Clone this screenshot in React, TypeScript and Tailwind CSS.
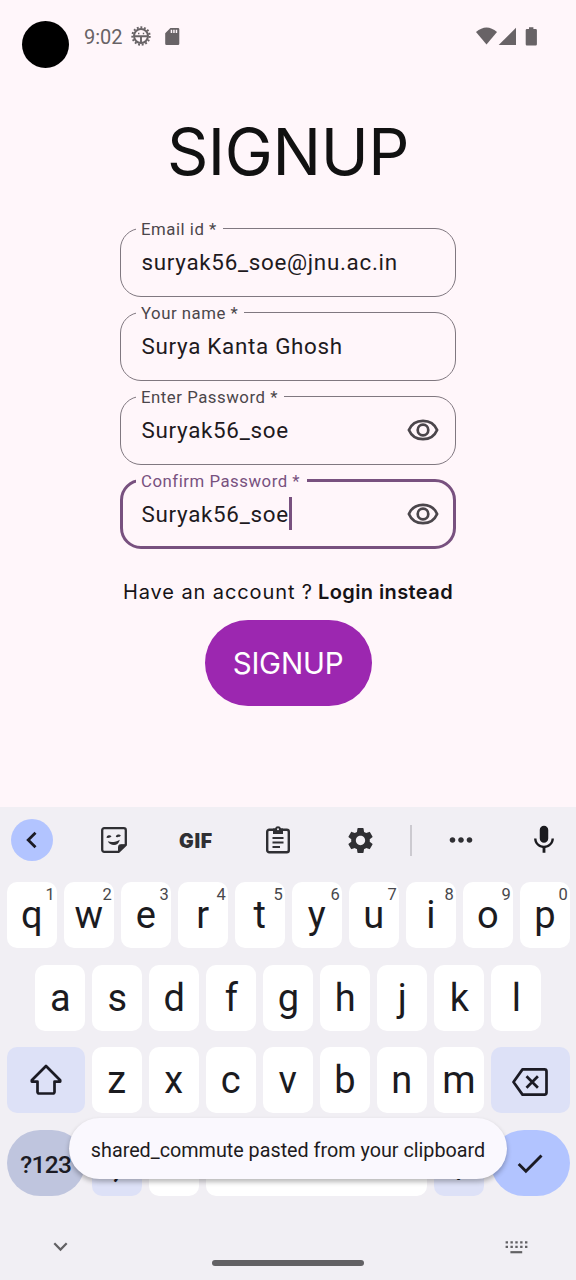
import type { ReactNode } from 'react';
import { MdMic, MdMoreHoriz, MdSettings } from 'react-icons/md';

function StatusBar() {
  return (
    <header className="flex h-[75px] items-start justify-between pl-[21.500px] pr-[38px] text-[#686366]">
      <div className="flex items-start">
        <div className="mt-[21px] h-[47px] w-[47px] rounded-full bg-black" />
        <span className="ml-[15.500px] mt-[25px] text-[20px] leading-6">9:02</span>
        <svg className="ml-[8px] mt-[26px]" width="20" height="20" viewBox="0 0 20 20" fill="none" stroke="currentColor">
          <circle cx="10" cy="10" r="8.7" strokeWidth="2" strokeDasharray="1.9 1.75" />
          <circle cx="10" cy="10" r="7" strokeWidth="2" />
          <path d="M3 10.200h14M10 10v7" strokeWidth="1.900" />
          <path d="M7 7.400h1.400M11.800 7.400h1.400" strokeWidth="1.500" />
        </svg>
        <svg className="ml-[14px] mt-[28px]" width="15" height="17" viewBox="0 0 15 17">
          <path fill="currentColor" fillRule="evenodd" d="M5.400 0H13a1.300 1.300 0 0 1 1.300 1.300v14.400A1.300 1.300 0 0 1 13 17H1.500A1.300 1.300 0 0 1 .2 15.700V5.200zM5.700 1.700v3.300h1.500V1.700zm2.500 0v3.300h1.500V1.700zm2.500 0v3.300h1.500V1.700z" />
        </svg>
      </div>
      <svg className="mt-[27px]" width="62" height="19" viewBox="0 0 62 19" fill="currentColor">
        <path d="M0 5Q10.500-4.200 21 5L10.500 17.600z" />
        <path d="M40 .7V18H22.700z" />
        <path d="M53 .2h4.400v1.800H59.700a1.200 1.200 0 0 1 1.200 1.200v14.100a1.200 1.200 0 0 1-1.200 1.200h-8.800a1.200 1.200 0 0 1-1.200-1.200V3.200A1.200 1.200 0 0 1 50.900 2h2.100z" />
      </svg>
    </header>
  );
}

function EyeIcon() {
  return (
    <svg width="32" height="24" viewBox="0 0 32 24" fill="none" stroke="#4b464b" strokeWidth="2.700">
      <path d="M1.900 12C4.400 6 9.600 2.800 16 2.800S27.600 6 30.100 12C27.600 18 22.400 21.200 16 21.200S4.400 18 1.900 12z" />
      <circle cx="16" cy="12" r="5.300" />
    </svg>
  );
}

function Field({ label, value, eye, focused }: { label: string; value: string; eye?: boolean; focused?: boolean }) {
  return (
    <fieldset
      className={
        focused
          ? 'h-[80px] w-[336px] rounded-[21px] border-[3px] border-[#78517f]'
          : 'h-[80px] w-[336px] rounded-[21px] border-[1.400px] border-[#807880]'
      }
    >
      <legend
        className={
          focused
            ? 'ml-[13px] h-6 pl-[5px] pr-[7px] text-[16.800px] leading-6 tracking-[0.520px] text-[#78517f]'
            : 'ml-[15px] h-6 pl-[5px] pr-[6px] text-[16.800px] leading-6 tracking-[0.520px] text-[#4b464b]'
        }
      >
        {label}
      </legend>
      <div className={focused ? 'flex h-[42px] items-center pl-[18.500px] pr-[14.500px]' : 'flex h-[42px] items-center pl-[20.500px] pr-[16.500px]'}>
        <span className="text-[22.400px] leading-[34px] tracking-[0.700px] text-[#1e1a1e]">{value}</span>
        {focused && <span className="h-[33px] w-[3px] bg-[#78517f]" />}
        {eye && (
          <span className="ml-auto">
            <EyeIcon />
          </span>
        )}
      </div>
    </fieldset>
  );
}

function Key({ children, hint }: { children?: ReactNode; hint?: string }) {
  return (
    <div className="relative flex h-[66px] w-[50px] items-center justify-center rounded-[10px] bg-white text-[38px] text-[#1b1b1f]">
      <span className="leading-none">{children}</span>
      {hint && <span className="absolute right-[2px] top-[3px] text-[16.500px] leading-5 text-[#48484c]">{hint}</span>}
    </div>
  );
}

function Toolbar() {
  return (
    <div className="flex h-[66px] items-center text-[#2f2f33]">
      <div className="ml-[11px] flex h-[42px] w-[42px] items-center justify-center rounded-full bg-[#b2c4ff]">
        <svg width="14" height="18" viewBox="0 0 14 18" fill="none" stroke="#1b1b24" strokeWidth="2.800">
          <path d="M10.500 1.700 3.200 9l7.300 7.300" />
        </svg>
      </div>
      <svg className="ml-[48px]" width="26" height="26" viewBox="0 0 26 26" fill="none" stroke="currentColor" strokeWidth="2.300" strokeLinejoin="round">
        <path d="M3.200 1.200h19.600a2 2 0 0 1 2 2V18l-7 6.800H3.200a2 2 0 0 1-2-2V3.200a2 2 0 0 1 2-2z" />
        <path d="M17.500 24.500v-4.800a2 2 0 0 1 2-2h5z" fill="currentColor" strokeWidth="1" />
        <path d="M6.500 10.800a1.700 1.700 0 0 1 3.100-.7M15.900 10.100a1.700 1.700 0 0 1 3.100-.8" strokeWidth="2.200" />
        <path d="M6.800 14.300c3.500 1.300 8.300.8 12-1.600-.7 3.300-3 5.300-5.800 5.300-2.700 0-4.900-1.200-6.200-3.700z" fill="currentColor" stroke="none" />
      </svg>
      <span className="ml-[51px] flex w-[36px] justify-center pt-px font-['Inter'] text-[19.500px] font-black leading-6 tracking-[0.700px]">GIF</span>
      <svg className="ml-[51px]" width="26" height="30" viewBox="0 0 26 30" fill="none" stroke="currentColor" strokeWidth="2.400">
        <rect x="2.200" y="4.700" width="21.600" height="22.600" rx="2" />
        <path d="M8 3.500h2a3.100 3.100 0 0 1 6 0h2v5.500H8z" fill="currentColor" stroke="none" />
        <circle cx="13" cy="4.200" r="1" fill="#f1eff4" stroke="none" />
        <path d="M7.500 13h11M7.500 17.500h11M7.500 22h7.500" strokeWidth="2" />
      </svg>
      <MdSettings className="ml-[54px]" size={31} />
      <div className="ml-[34px] h-[31px] w-[2px] bg-[#cccad0]" />
      <MdMoreHoriz className="ml-[32px]" size={34} />
      <MdMic className="ml-[48.500px] text-[#1b1b1f]" size={34} />
    </div>
  );
}

function Keyboard() {
  return (
    <section className="relative flex h-[473px] flex-col bg-[#f1eff4] font-['Roboto',sans-serif]">
      <Toolbar />
      <div className="mt-[9px] flex flex-col gap-[16.600px]">
        <div className="flex gap-[7px] pl-[6.800px]">
          {'qwertyuiop'.split('').map((k, i) => (
            <Key key={k} hint={String((i + 1) % 10)}>{k}</Key>
          ))}
        </div>
        <div className="flex gap-[7px] pl-[35.300px]">
          {'asdfghjkl'.split('').map((k) => (
            <Key key={k}>{k}</Key>
          ))}
        </div>
        <div className="flex gap-[7px] pl-[6.800px]">
          <div className="flex h-[66px] w-[78px] items-center justify-center rounded-[10px] bg-[#dde1f7]">
            <svg width="34" height="32" viewBox="0 0 34 32" fill="none" stroke="#1b1b24" strokeWidth="2.700" strokeLinejoin="round">
              <path d="M17 2 31.200 16.300v1.300H25.500V28a1.500 1.500 0 0 1-1.500 1.500H10A1.500 1.500 0 0 1 8.500 28V17.600H2.800v-1.300z" />
            </svg>
          </div>
          {'zxcvbnm'.split('').map((k) => (
            <Key key={k}>{k}</Key>
          ))}
          <div className="flex h-[66px] w-[79px] items-center justify-center rounded-[10px] bg-[#dde1f7]">
            <svg className="mt-1" width="36" height="28" viewBox="0 0 36 28" fill="none" stroke="#1b1b24" strokeWidth="2.700" strokeLinejoin="round">
              <path d="M10.500 1.400h22a2 2 0 0 1 2 2v21.200a2 2 0 0 1-2 2h-22L1.500 14z" />
              <path d="m14.500 8.300 11.400 11.400M25.900 8.300 14.500 19.700" />
            </svg>
          </div>
        </div>
        <div className="flex gap-[7px] pl-[6.800px]">
          <div className="flex h-[66px] w-[78px] items-center justify-center rounded-full bg-[#bfc5de] pt-[5px] text-[24.500px] font-medium tracking-[-0.600px] text-[#1b1b24]">?123</div>
          <div className="flex h-[66px] w-[50px] items-center justify-center rounded-[10px] bg-[#dde1f7] pt-[5px] text-[36px] text-[#1b1b24]">,</div>
          <div className="h-[66px] w-[50px] rounded-[10px] bg-white" />
          <div className="h-[66px] w-[221px] rounded-[10px] bg-white" />
          <div className="flex h-[66px] w-[50px] items-center justify-center rounded-[10px] bg-[#dde1f7] pt-[12px] text-[34px] text-[#1b1b24]">.</div>
          <div className="flex h-[66px] w-[79px] items-center justify-center rounded-full bg-[#b2c4ff]">
            <svg width="28" height="22" viewBox="0 0 28 22" fill="none" stroke="#1b1b24" strokeWidth="2.900">
              <path d="m2.700 12 7.200 7.200L25.500 3.500" />
            </svg>
          </div>
        </div>
      </div>
      <div className="mt-[38px] flex items-start pl-[53px] text-[#626164]">
        <svg className="mt-[8px]" width="15" height="10" viewBox="0 0 15 10" fill="none" stroke="currentColor" strokeWidth="2.200">
          <path d="m1.300 1.300 6.200 6.300 6.200-6.300" />
        </svg>
        <div className="ml-[144px] mt-[26.500px] h-[6px] w-[152px] rounded-full bg-[#626164]" />
        <svg className="ml-[141px] mt-[7px]" width="23" height="13" viewBox="0 0 23 13" stroke="currentColor" strokeWidth="2.200">
          <path d="M.6 1.400H22.600M.6 5.800H22.600" strokeDasharray="2.400 2.450" />
          <path d="M5.400 11.200h11.800" />
        </svg>
      </div>
      <div className="absolute left-[69px] top-[311px] flex h-[61px] w-[438px] items-center justify-center rounded-full bg-[#faf8fe] text-[19.750px] text-[#1e1b20] shadow-[0_3px_5px_rgba(0,0,0,0.28)]">
        <span className="whitespace-nowrap pt-[4px]">shared_commute pasted from your clipboard</span>
      </div>
    </section>
  );
}

export default function App() {
  return (
    <div className="flex h-[1280px] w-[576px] flex-col overflow-hidden bg-[#fff6fa] font-['Roboto',sans-serif]">
      <StatusBar />
      <main className="flex h-[732px] flex-col items-center">
        <h1 className="mt-[37px] h-[80px] whitespace-nowrap font-['Inter'] text-[64.500px] leading-[80px] tracking-[-0.400px] text-[#111]">SIGNUP</h1>
        <form className="mt-[24.600px] flex flex-col gap-[4.100px]">
          <Field label="Email id *" value="suryak56_soe@jnu.ac.in" />
          <Field label="Your name *" value="Surya Kanta Ghosh" />
          <Field label="Enter Password *" value="Suryak56_soe" eye />
          <Field label="Confirm Password *" value="Suryak56_soe" eye focused />
        </form>
        <p className="mt-[27px] flex h-8 items-center gap-[5px] whitespace-nowrap font-['Inter'] text-[20px] text-[#161316]">
          <span className="tracking-[0.900px]">Have an account ?</span>
          <span className="font-semibold tracking-[0.400px]">Login instead</span>
        </p>
        <button className="mt-[12px] flex h-[86px] w-[167px] items-center justify-center rounded-full bg-[#9c27b0] font-['Inter'] text-[29.500px] font-normal tracking-[-0.200px] text-white">
          SIGNUP
        </button>
      </main>
      <Keyboard />
    </div>
  );
}
